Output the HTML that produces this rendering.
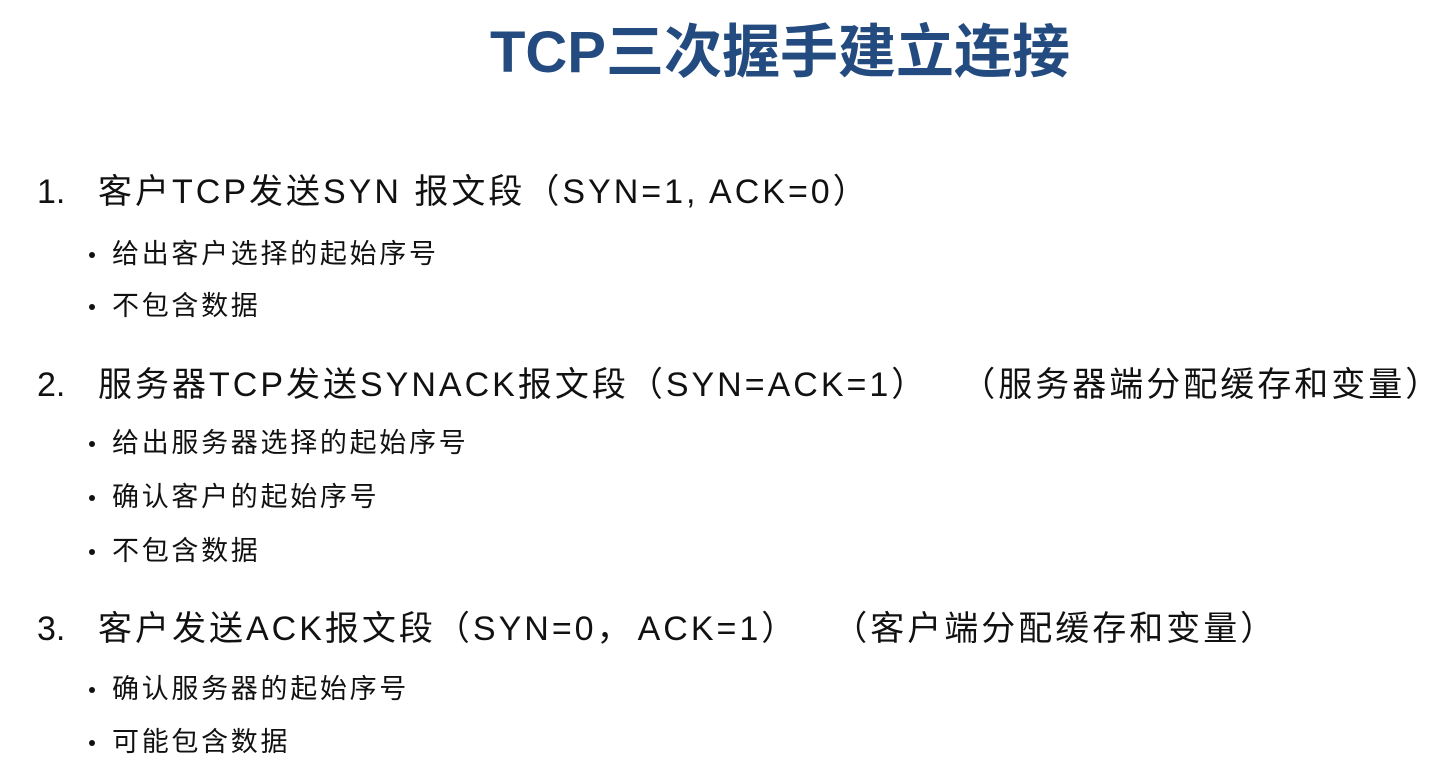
<!DOCTYPE html>
<html><head><meta charset="utf-8"><style>
body{margin:0;width:1439px;height:772px;background:#fff;position:relative;overflow:hidden;font-family:"Liberation Sans","Noto Sans CJK SC",sans-serif;color:#111}
.t{position:absolute;left:0;width:1560px;text-align:center;top:18px;font-size:58px;font-weight:bold;color:#234b7f;white-space:nowrap;line-height:70px}
.m{position:absolute;left:37px;font-size:34px;white-space:nowrap;line-height:40px}
.m span{position:absolute;left:61px;letter-spacing:3px}
.m i{font-style:normal;display:inline-block}
.b{position:absolute;left:112px;font-size:27px;letter-spacing:2.7px;white-space:nowrap;line-height:32px}
.b:before{content:"";position:absolute;left:-23px;top:14px;width:6px;height:6px;border-radius:50%;background:#111}
</style></head><body>
<div class="t">TCP三次握手建立连接</div>
<div class="m" style="top:172px">1.<span>客户TCP发送SYN 报文段（SYN=1, ACK=0）</span></div>
<div class="b" style="top:238px">给出客户选择的起始序号</div>
<div class="b" style="top:290px">不包含数据</div>
<div class="m" style="top:365px">2.<span>服务器TCP发送SYNACK报文段（SYN=ACK=1）<i style="margin-left:33px">（服务器端分配缓存和变量）</i></span></div>
<div class="b" style="top:427px">给出服务器选择的起始序号</div>
<div class="b" style="top:481px">确认客户的起始序号</div>
<div class="b" style="top:535px">不包含数据</div>
<div class="m" style="top:609px">3.<span>客户发送ACK报文段（SYN=0，<i style="margin-left:4px">ACK=1）</i><i style="margin-left:35px">（客户端分配缓存和变量）</i></span></div>
<div class="b" style="top:673px">确认服务器的起始序号</div>
<div class="b" style="top:726px">可能包含数据</div>
</body></html>
